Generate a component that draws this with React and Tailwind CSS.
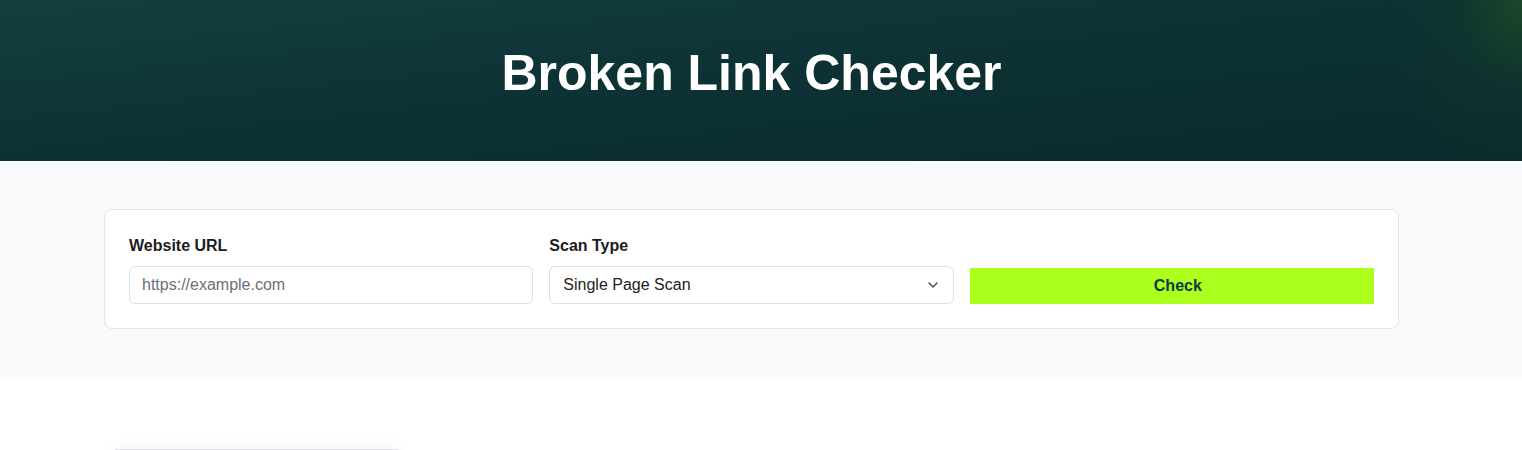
import React from 'react';
import { ChevronDown } from 'lucide-react';

const App = () => {
    return (
        <div className="min-h-screen bg-white font-['Liberation_Sans',Arial,sans-serif]">
            {/* Header */}
            <header className="relative h-[161px] overflow-hidden bg-gradient-to-br from-[#123f3f] via-[#0d3134] to-[#0a2a2b]">
                <div className="absolute inset-0 bg-[radial-gradient(ellipse_140px_190px_at_100%_0%,rgba(30,72,40,0.9)_0%,rgba(20,58,42,0.4)_45%,transparent_100%)]" />
                <div className="relative w-[1503px] h-full flex items-center justify-center pb-[14px]">
                    <h1 className="text-[50px] font-bold text-white tracking-normal">Broken Link Checker</h1>
                </div>
            </header>

            {/* Form section */}
            <section className="bg-[#f8f9fb] pt-[48px] pb-[48px]">
                <div className="w-[1503px] px-[104px]">
                    <div className="bg-white border border-[#e3e6eb] rounded-lg px-[24px] pt-[24px] pb-[24px]">
                        <div className="grid grid-cols-3 gap-4 items-end">
                            <div>
                                <label className="block text-[16px] leading-6 font-bold text-[#1c1c1c] mb-[8px]">Website URL</label>
                                <input
                                    type="text"
                                    placeholder="https://example.com"
                                    className="w-full h-[38px] px-3 rounded-md border border-[#dcdfe5] text-[16px] text-[#222] placeholder:text-[#6b6f76] outline-none"
                                />
                            </div>
                            <div>
                                <label className="block text-[16px] leading-6 font-bold text-[#1c1c1c] mb-[8px]">Scan Type</label>
                                <div className="relative">
                                    <div className="w-full h-[38px] px-[13px] rounded-md border border-[#dcdfe5] flex items-center text-[16px] text-[#222]">
                                        Single Page Scan
                                    </div>
                                    <ChevronDown size={16} strokeWidth={2} className="absolute right-[13px] top-[11px] text-[#444]" />
                                </div>
                            </div>
                            <div>
                                <button className="w-full h-[36px] pl-3 bg-[#adff1e] text-[#0e3b3b] text-[16px] font-bold">
                                    Check
                                </button>
                            </div>
                        </div>
                    </div>
                </div>
            </section>

            {/* Results */}
            <section className="pt-[72px]">
                <div className="ml-[115px] w-[283px] h-[40px] bg-[#f9fafc] border-t border-[#dfe2e8] shadow-[0_-4px_12px_rgba(0,0,0,0.04)]" />
            </section>
        </div>
    );
};

export default App;
